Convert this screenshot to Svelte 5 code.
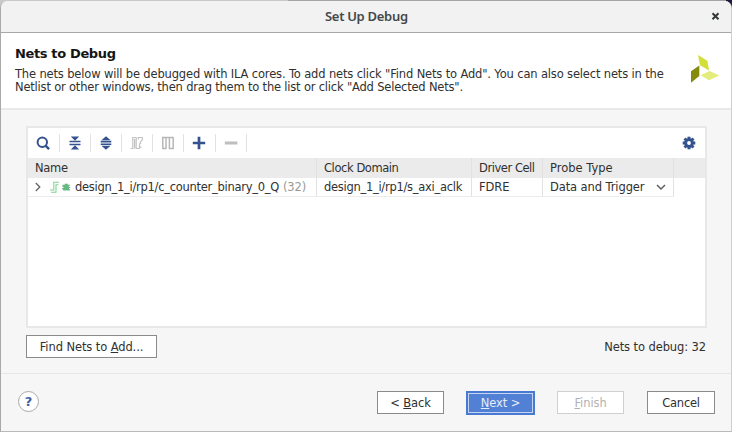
<script>
  const columns = [
    { label: 'Name', width: 289 },
    { label: 'Clock Domain', width: 155 },
    { label: 'Driver Cell', width: 71 },
    { label: 'Probe Type', width: 131 }
  ];
  const tools = ['search', 'collapse', 'expand', 'probe', 'wave', 'add', 'remove'];
</script>

<div class="desktop">
  <div class="dialog">
    <div class="titlebar">
      <span class="caption">Set Up Debug</span>
      <svg class="close" width="9" height="9" viewBox="0 0 9 9"><path d="M1.5 1.3 7.5 7.3M7.5 1.3 1.5 7.3" stroke="#33383a" stroke-width="2" /></svg>
    </div>
    <header>
      <div class="intro">
        <h1>Nets to Debug</h1>
        <p><span class="l1">The nets below will be debugged with ILA cores. To add nets click "Find Nets to Add". You can also select nets in the</span><br /><span class="l2">Netlist or other windows, then drag them to the list or click "Add Selected Nets".</span></p>
      </div>
      <svg class="logo" width="30" height="30" viewBox="0 0 30 30">
        <path d="M8 1 17.3 6.8 19.2 16.6 10 11.3Z" fill="#d2df38" />
        <path d="M1 17.2 9.3 11.6V22L1 28.8Z" fill="#858a0c" />
        <path d="M10.5 21.3 19.5 17 29.3 21.6 19 26.3Z" fill="#e4ec7b" />
      </svg>
    </header>
    <main>
      <div class="panel">
        <div class="toolbar">
          {#each tools as tool}
            <div class="tool">
              <svg width="16" height="16" viewBox="0 0 16 16" fill="none" stroke="#34528e">
                {#if tool === 'search'}
                  <circle cx="7.3" cy="7.2" r="4.7" stroke-width="2" /><path d="m10.5 10.6 3.6 3.6" stroke-width="2.4" />
                {:else if tool === 'collapse'}
                  <path d="M2.5 6.5h11M2.5 9.6h11" stroke-width="1.5" /><path d="M3.8 1.5h8.4L8 5.8ZM8 10.2l4.2 4.3H3.8Z" fill="#34528e" stroke="none" />
                {:else if tool === 'expand'}
                  <path d="M2.7 6.6h10.6M2.7 9.3h10.6" stroke-width="1.6" /><path d="M8 1.3 12.6 5.2H3.4ZM3.4 10.8h9.2L8 14.7Z" fill="#34528e" stroke="none" />
                {:else if tool === 'probe'}
                  <path d="M1.5 13.5h2.3v-11h3.4v11h3.3V8.2M5.6 4v9.5M9.3 4.6V2.5h4v2.6L11.5 6.8V9M11 12.2h1.5" stroke="#c2c2c2" stroke-width="1.2" />
                {:else if tool === 'wave'}
                  <path d="M2.8 2v11.4H6V2.6h3.4v10.8h3.8V2M2 2.6h4M9 2.6h4.2" stroke="#b7b7b7" stroke-width="1.5" />
                {:else if tool === 'add'}
                  <path d="M8 1.8v12.4M1.8 8h12.4" stroke-width="2.7" />
                {:else}
                  <path d="M1.8 8h12.6" stroke="#bebebe" stroke-width="3.2" />
                {/if}
              </svg>
            </div>
          {/each}
          <svg class="gear" width="14" height="14" viewBox="-7 -7 14 14">
            <g fill="#34528e">
              {#each [0, 45, 90, 135] as a}
                <rect x="-1.5" y="-6.3" width="3" height="12.6" transform="rotate({a})" />
              {/each}
              <circle r="4.8" />
            </g>
            <circle r="1.9" fill="#fff" />
          </svg>
        </div>
        <div class="row head">
          {#each columns as col, i}
            <div class="cell c{i}" style="width: {col.width}px"><span>{col.label}</span></div>
          {/each}
        </div>
        <div class="row data">
          <div class="cell" style="width: {columns[0].width}px">
            <svg class="chev" width="6" height="10" viewBox="0 0 6 10"><path d="m.8 1 4 4-4 4" fill="none" stroke="#666" stroke-width="1.3" /></svg>
            <svg class="bus" width="22" height="12" viewBox="0 0 22 12">
              <path d="M0 9h3.8V1.3H9M1 11.3h5V3.8h2.5" fill="none" stroke="#86d292" stroke-width="1.1" />
              <path d="M12.5 3.7h2.3v-1h3v1h2v1.2h-1v1h1.4v1.2h-1.1v1.2h1v1.2h-7V8.3h-1V7h1.4V5.9h-1Z" fill="#68b981" />
            </svg>
            <span class="net">design_1_i/rp1/c_counter_binary_0_Q</span><span class="count">(32)</span>
          </div>
          <div class="cell" style="width: {columns[1].width}px"><span class="clk">design_1_i/rp1/s_axi_aclk</span></div>
          <div class="cell" style="width: {columns[2].width}px"><span class="fdre">FDRE</span></div>
          <div class="cell" style="width: {columns[3].width}px">
            <span class="ptype">Data and Trigger</span>
            <svg class="down" width="10" height="7" viewBox="0 0 10 7"><path d="m1 1 4 4 4-4" fill="none" stroke="#606060" stroke-width="1.5" /></svg>
          </div>
        </div>
      </div>
      <div class="under">
        <button class="find"><span>Find Nets to <u>A</u>dd...</span></button>
        <span class="total">Nets to debug: 32</span>
      </div>
    </main>
    <footer>
      <div class="help">?</div>
      <button class="back"><span>&lt; <u>B</u>ack</span></button>
      <button class="next"><span><u>N</u>ext &gt;</span></button>
      <button class="finish"><span><u>F</u>inish</span></button>
      <button class="cancel"><span>Cancel</span></button>
    </footer>
  </div>
</div>

<style>
  .desktop {
    display: flow-root;
    width: 732px;
    height: 432px;
    box-sizing: border-box;
    overflow: hidden;
    background: linear-gradient(90deg, #c9c9c9 0 288px, #a5a3a8 288px 726px, #1d1b3c 726px);
    font: 11.5px/14px "DejaVu Sans", sans-serif;
    letter-spacing: -0.1px;
    color: #303030;
    white-space: nowrap;
  }
  .dialog {
    height: 431px;
    box-sizing: border-box;
    border-left: 1px solid #a9a9a9;
    border-right: 1px solid #cfcfcf;
    border-bottom: 1px solid #b9b9b9;
    border-radius: 7px 7px 0 0;
    margin-top: 1px;
    background: #f6f6f6;
    overflow: hidden;
  }
  .titlebar {
    height: 32px;
    box-sizing: border-box;
    border-bottom: 1px solid #a8a8a6;
    background: #f2f2f2;
    display: flex;
    align-items: center;
    padding: 0 11px 1px 324px;
    justify-content: space-between;
  }
  .caption { font: 600 13px/18px "Noto Sans", sans-serif; letter-spacing: -0.3px; color: #43484a; }
  header {
    height: 77px;
    box-sizing: border-box;
    border-bottom: 2px solid #e9e9e9;
    background: #fff;
    display: flex;
    justify-content: space-between;
    padding: 13px 11px 0 14px;
  }
  h1 { font: bold 13px/16px "DejaVu Sans", sans-serif; letter-spacing: -0.36px; color: #151515; margin: 0; }
  p { margin: 6px 0 0; line-height: 13.4px; }
  .l1 { letter-spacing: -0.155px; }
  .l2 { letter-spacing: -0.195px; }
  .logo { margin-top: 8px; }
  main { height: 263px; box-sizing: border-box; padding: 16px 25px 0; }
  .panel {
    width: 681px;
    height: 202px;
    box-sizing: border-box;
    border: 2px solid #e8e8e8;
    background: #fff;
  }
  .toolbar { height: 30px; display: flex; align-items: center; padding-left: 0.4px; }
  .tool {
    width: 31.2px;
    height: 18px;
    box-sizing: border-box;
    border-right: 1px solid #e2e2e2;
    display: flex;
    align-items: center;
    justify-content: center;
  }
  .gear { margin-left: auto; margin-right: 9px; }
  .row { display: flex; height: 19px; }
  .head { background: #ebebeb; height: 20px; }
  .cell {
    box-sizing: border-box;
    display: flex;
    align-items: center;
    padding-left: 7px;
    border-right: 1px solid #e2e2e2;
  }
  .c0 { letter-spacing: -0.3px; }
  .c1 { letter-spacing: -0.42px; }
  .c2 { letter-spacing: -0.45px; }
  .c3 { letter-spacing: 0; }
  .data { height: 18.5px; }
  .data .cell { border-bottom: 1px solid #ececec; }
  .chev { margin-right: 9px; }
  .bus { margin-right: 2px; }
  .net { margin-left: 1px; letter-spacing: -0.275px; }
  .clk { letter-spacing: -0.28px; }
  .ptype { letter-spacing: -0.1px; }
  .count { color: #999; margin-left: 4px; letter-spacing: -0.1px; }
  .down { margin-left: auto; margin-right: 7px; margin-top: 2px; }
  .under { display: flex; justify-content: space-between; align-items: center; margin-top: 7px; height: 23px; width: 681px; }
  .total { margin-right: 1px; }
  button {
    font: inherit;
    letter-spacing: inherit;
    color: inherit;
    box-sizing: border-box;
    padding: 0;
    height: 23px;
    width: 67px;
    background: #fff;
    border: 1px solid #8b8b8b;
    border-radius: 0;
  }
  .find { width: 131px; }
  footer {
    height: 57px;
    box-sizing: border-box;
    border-top: 1px solid #e6e6e6;
    display: flex;
    align-items: center;
    padding: 1px 16px 0 17px;
  }
  .help {
    width: 21px;
    height: 21px;
    box-sizing: border-box;
    border: 1.5px solid #a9a9a9;
    border-radius: 50%;
    background: #fff;
    color: #3f5fa6;
    font-weight: bold;
    font-size: 13px;
    line-height: 19px;
    text-align: center;
    margin-top: -2px;
  }
  .back { margin-left: auto; }
  .next {
    width: 69px;
    height: 24px;
    margin: 0 22px;
    border: 2px solid #477ad0;
    background: #5280d4;
    box-shadow: inset 0 0 0 1px #c4d4f1;
    color: #e6edf9;
  }
  .finish { border-color: #d0d0d0; color: #b2b2b2; margin-right: 23px; }
  .cancel { width: 68px; letter-spacing: -0.25px; }
</style>
